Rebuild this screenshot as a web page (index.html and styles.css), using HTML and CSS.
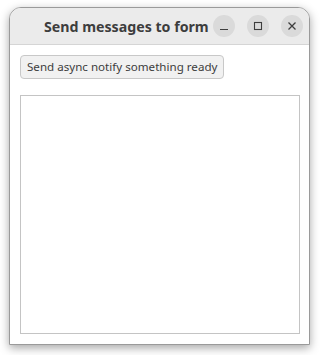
FILE: index.html
```html
<!DOCTYPE html>
<html>
<head>
<meta charset="utf-8">
<link rel="stylesheet" href="styles.css">
</head>
<body>
<div class="window">
  <div class="titlebar">
    <div class="title">Send messages to form</div>
    <div class="controls">
      <div class="ctl"><svg width="10" height="10" viewBox="0 0 10 10"><path d="M1 8.5H9" stroke="#3d3d3d" stroke-width="1.2"/></svg></div>
      <div class="ctl"><svg width="10" height="10" viewBox="0 0 10 10"><rect x="1.5" y="1.5" width="7" height="7" fill="none" stroke="#3d3d3d" stroke-width="1.1"/></svg></div>
      <div class="ctl"><svg width="10" height="10" viewBox="0 0 10 10"><path d="M1.5 1.5L8.5 8.5M8.5 1.5L1.5 8.5" stroke="#3d3d3d" stroke-width="1.3"/></svg></div>
    </div>
  </div>
  <div class="content">
    <button class="btn">Send async notify something ready</button>
    <div class="textbox"></div>
  </div>
</div>
</body>
</html>
```
FILE: styles.css
```css
html, body { margin: 0; padding: 0; background: #ffffff; }
body { width: 320px; height: 355px; overflow: hidden; padding-top: 7px; padding-left: 9px; box-sizing: border-box; }
.window {
  width: 301px; height: 338px; box-sizing: border-box;
  border: 1px solid #9a9a9a; border-radius: 12px 12px 0 0;
  background: #fff; display: flex; flex-direction: column;
  box-shadow: 0 3px 10px rgba(0,0,0,0.35);
  overflow: hidden;
}
.titlebar {
  height: 37px; flex: none; box-sizing: border-box;
  background: #ebebeb; border-bottom: 1px solid #d5d5d5;
  display: flex; align-items: center; position: relative;
}
.title {
  font-family: "Noto Sans", sans-serif; font-weight: 700; font-size: 14.2px;
  color: #3d3d3d; margin-left: 34px; letter-spacing: 0;
}
.controls { display: flex; gap: 12px; margin-left: auto; margin-right: 6px; }
.ctl {
  width: 22px; height: 22px; border-radius: 50%; background: #dadada;
  display: flex; align-items: center; justify-content: center;
}
.content { padding: 10px 9px 10px 10px; display: flex; flex-direction: column; align-items: flex-start; flex: 1; }
.btn {
  height: 24px; box-sizing: border-box; padding: 0 6px;
  font-family: "Noto Sans", sans-serif; font-size: 11.6px; color: #3d3d3d;
  background: #f1f1f1; border: 1px solid #c8c8c8; border-radius: 4px;
  line-height: 20px;
}
.textbox { margin-top: 16px; align-self: stretch; flex: 1; border: 1px solid #c4c4c4; }
```
